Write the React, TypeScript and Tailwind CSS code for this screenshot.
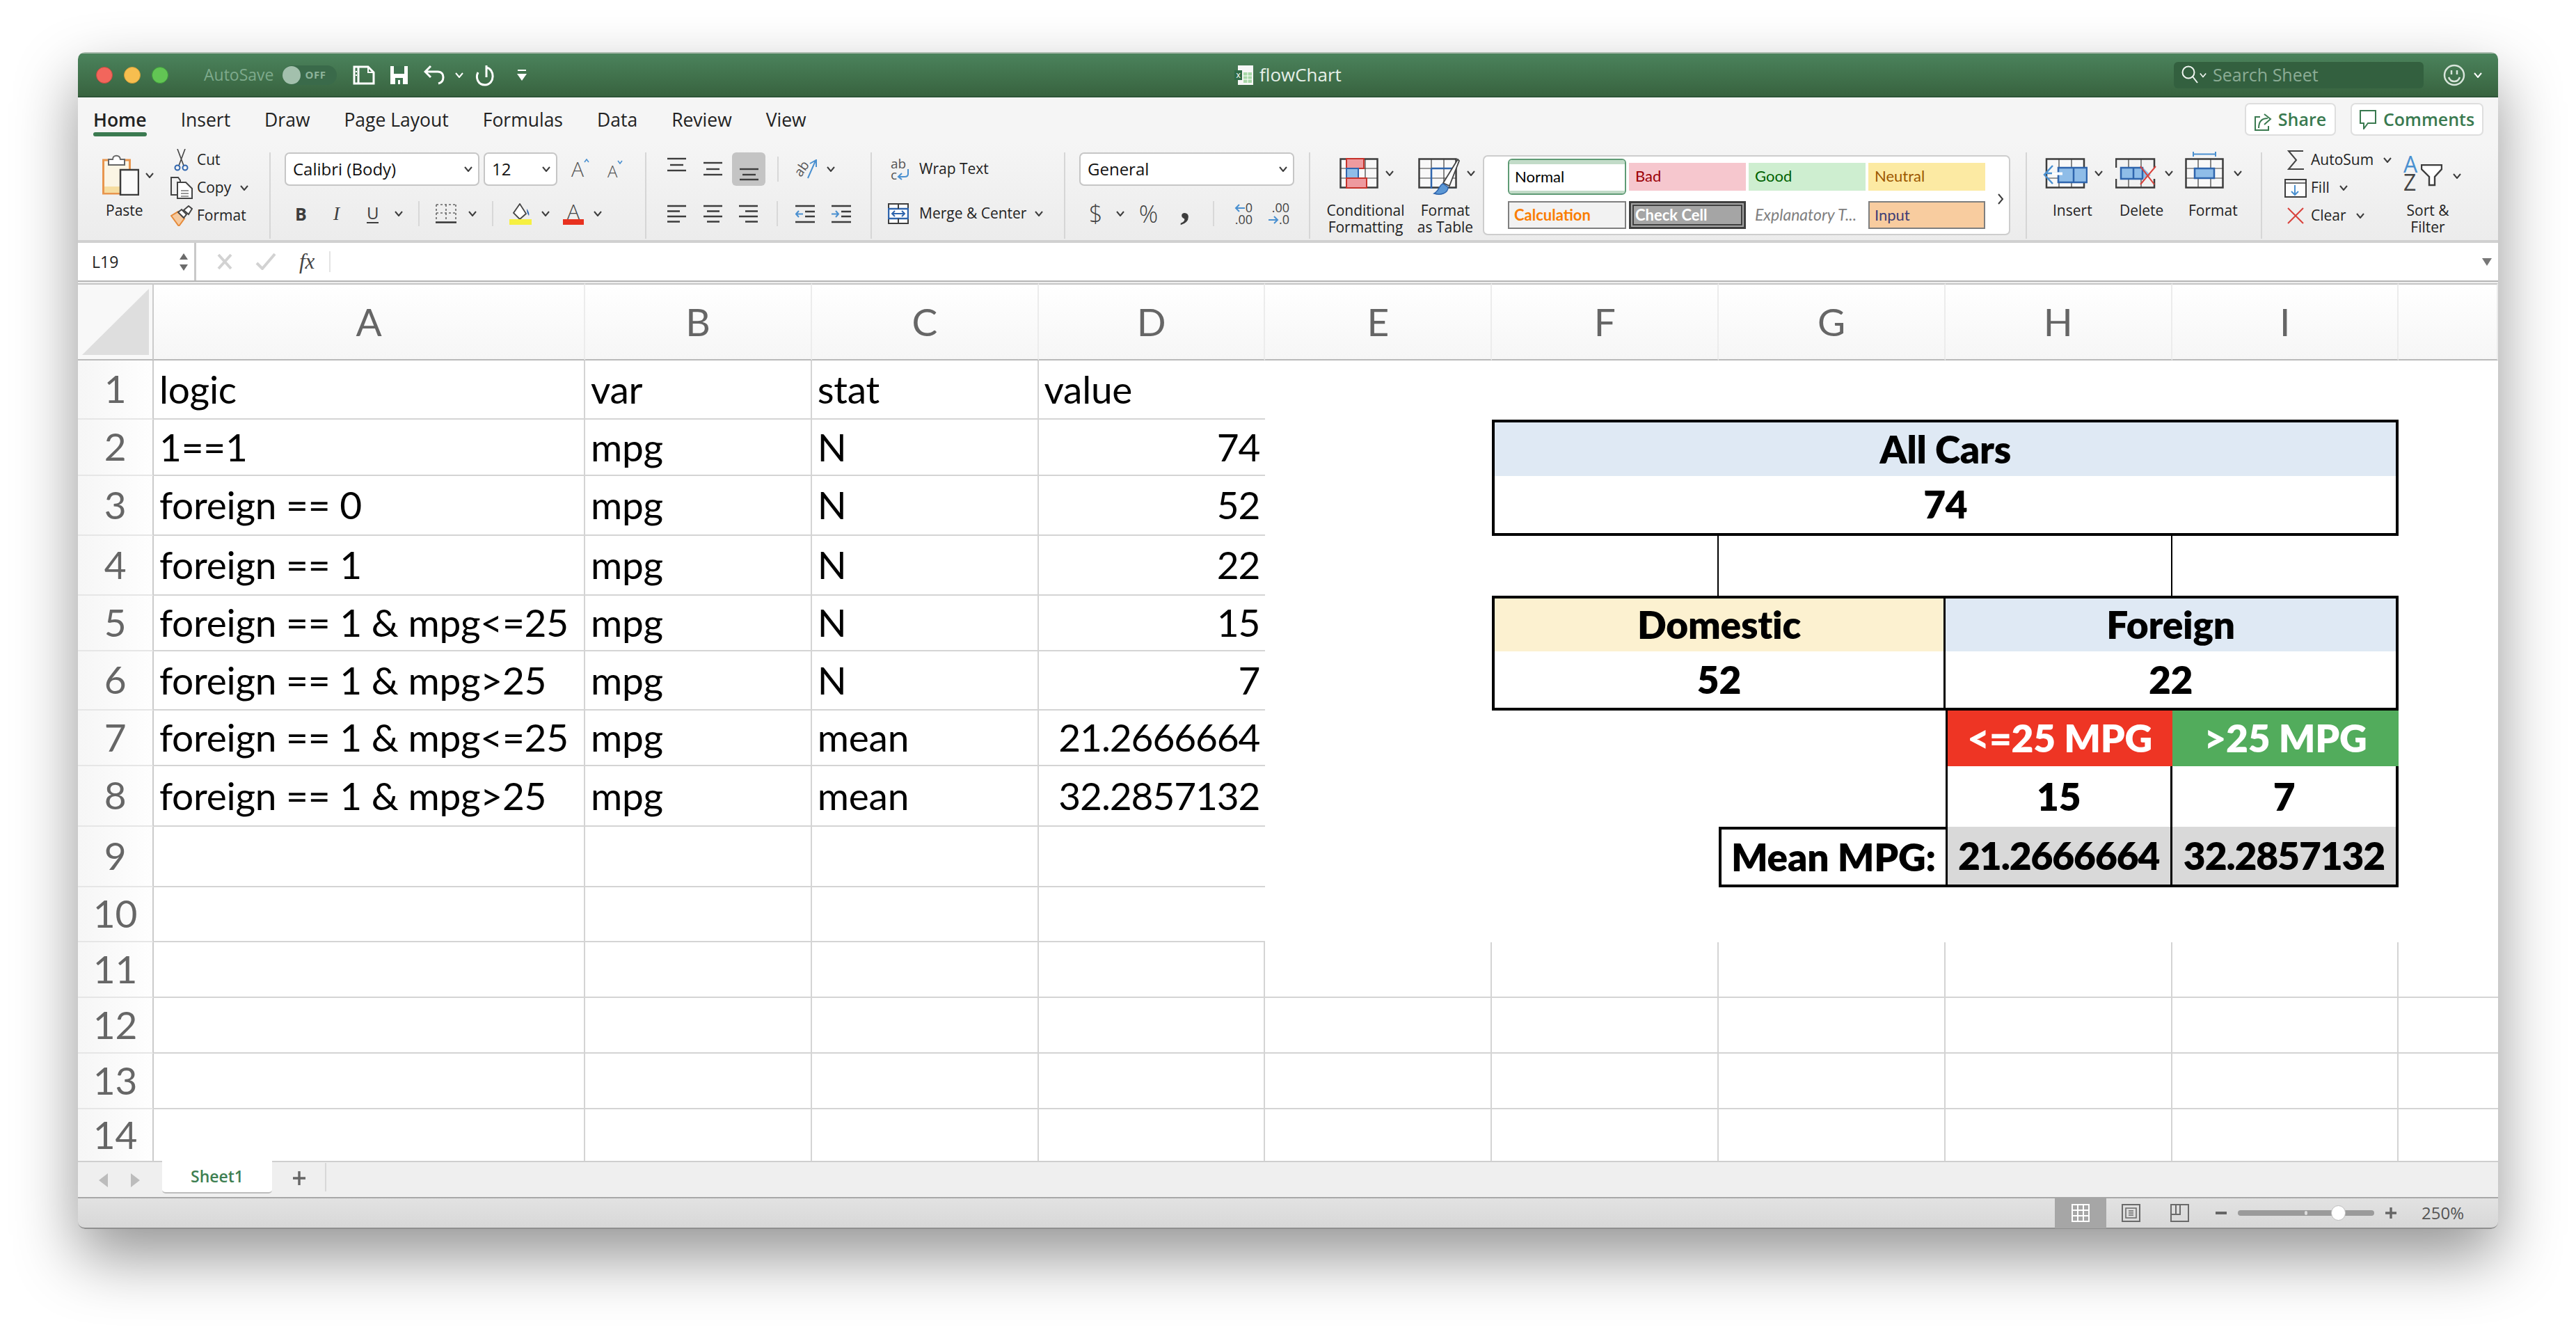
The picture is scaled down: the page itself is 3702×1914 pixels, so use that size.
import type { ReactNode } from "react";

const BLUE = "#4a90d0";
const NAVY = "#2f65ad";

function Caret({ className = "", color = "#3c3c3c" }: { className?: string; color?: string }) {
  return (
    <svg width="12" height="8" viewBox="0 0 12 8" className={`shrink-0 ${className}`}>
      <path d="M1 1l5 6 5-6" fill="none" stroke={color} strokeWidth="2" />
    </svg>
  );
}

function SmallSep({ className = "" }: { className?: string }) {
  return <div className={`h-[36px] w-[2px] shrink-0 bg-[#d8d8d8] ${className}`} />;
}

function GroupDivider() {
  return <div className="mt-[14px] h-[124px] w-[2px] shrink-0 bg-[#d6d6d6]" />;
}

function Select({ label, width, className = "" }: { label: string; width: string; className?: string }) {
  return (
    <div
      className={`flex h-[48px] items-center justify-between rounded-[7px] border-2 border-[#c6c6c6] bg-white pl-[10px] pr-[8px] text-[24px] text-[#111] ${width} ${className}`}
    >
      <span>{label}</span>
      <Caret />
    </div>
  );
}

/* ---------- icons ---------- */

function Paste() {
  return (
    <svg width="53" height="59" viewBox="0 0 53 59">
      <rect x="1.5" y="8" width="38" height="48" fill="#fbf5e4" stroke="#e8964e" strokeWidth="3" />
      <rect x="3" y="46" width="24" height="9" fill="#f6dda0" />
      <path d="M9 15V7h6c0-7 10-7 11 0h6v8z" fill="#fff" stroke="#666" strokeWidth="2" />
      <rect x="26" y="22" width="26" height="36" fill="#fafafa" stroke="#3b3b3b" strokeWidth="2.5" />
    </svg>
  );
}

function Scissors() {
  return (
    <svg width="21" height="32" viewBox="0 0 21 32">
      <path d="M5 0l9 24M16 0L7 24" fill="none" stroke="#444" strokeWidth="1.6" />
      <circle cx="5" cy="27" r="3.5" fill="none" stroke={NAVY} strokeWidth="2" />
      <circle cx="16" cy="27" r="3.5" fill="none" stroke={NAVY} strokeWidth="2" />
    </svg>
  );
}

function Copy() {
  return (
    <svg width="32" height="32" viewBox="0 0 32 32">
      <path d="M9 26H1V1h10l3 4v3" fill="none" stroke="#444" strokeWidth="2" />
      <path d="M10 8h12l9 9v14H10z" fill="#fff" stroke="#444" strokeWidth="2" />
      <path d="M15 20h11M15 24h11M15 28h11" stroke="#777" strokeWidth="1.5" />
    </svg>
  );
}

function FormatPainter() {
  return (
    <svg width="32" height="30" viewBox="0 0 32 30">
      <path d="M1 15l10-6 9 10-8 11z" fill="#f6c99d" stroke="#e58a3a" strokeWidth="2" />
      <path d="M11 10l5-4 7 7-4 5z" fill="#fff" stroke="#444" strokeWidth="2" />
      <path d="M19 7l7-6 5 4-5 8z" fill="#fff" stroke="#444" strokeWidth="2" />
    </svg>
  );
}

function Borders() {
  return (
    <svg width="30" height="28" viewBox="0 0 30 28">
      <path d="M1 1h28M1 1v24M29 1v24M15 1v24M1 13h28" fill="none" stroke="#666" strokeWidth="1.6" strokeDasharray="3 3" />
      <path d="M0 26.5h30" stroke="#333" strokeWidth="2.5" />
    </svg>
  );
}

function FillColor() {
  return (
    <svg width="32" height="31" viewBox="0 0 32 31">
      <path d="M15 1l-9 13 9 9 9-8z" fill="#fff" stroke="#444" strokeWidth="1.8" />
      <path d="M25 8c3 4 4 8 3 10-1-2-3-4-3-10z" fill={NAVY} />
      <rect y="23" width="32" height="8" fill="#f6f041" />
    </svg>
  );
}

function AlignV({ ys }: { ys: number[] }) {
  return (
    <svg width="27" height="48" viewBox="0 0 27 48" className="shrink-0">
      {ys.map((y, i) => (
        <path key={y} d={i === 1 ? `M4 ${y}h19` : `M0 ${y}h27`} stroke="#3d3d3d" strokeWidth="2.4" />
      ))}
    </svg>
  );
}

function AlignH({ kind }: { kind: "l" | "c" | "r" }) {
  const short = kind === "l" ? "M0" : kind === "c" ? "M5" : "M9";
  return (
    <svg width="27" height="27" viewBox="0 0 27 27" className="shrink-0">
      <path d="M0 2h27M0 17h27" stroke="#3d3d3d" strokeWidth="2.4" />
      <path d={`${short} 9.5h18${short} 24.5h18`} stroke="#3d3d3d" strokeWidth="2.4" />
    </svg>
  );
}

function Indent({ out }: { out?: boolean }) {
  return (
    <svg width="28" height="27" viewBox="0 0 28 27" className="shrink-0">
      <path d="M0 2h28M0 25h28M14 10h14M14 17h14" stroke="#3d3d3d" strokeWidth="2.4" />
      {out ? (
        <path d="M11 13.5H1M5 9l-4 4.5L5 18" fill="none" stroke={BLUE} strokeWidth="2" />
      ) : (
        <path d="M0 13.5h10M6 9l4 4.5L6 18" fill="none" stroke={BLUE} strokeWidth="2" />
      )}
    </svg>
  );
}

function Orientation() {
  return (
    <div className="flex h-[30px] w-[33px] shrink-0 items-center">
      <span className="w-[20px] -rotate-[55deg] text-center text-[19px] leading-[20px] text-[#555]">ab</span>
      <svg width="14" height="28" viewBox="0 0 14 28" className="-ml-[1px] shrink-0">
        <path d="M1 27L12 2M4 6l9-5 0 10" fill="none" stroke={BLUE} strokeWidth="2" />
      </svg>
    </div>
  );
}

function WrapIcon() {
  return (
    <div className="flex w-[30px] shrink-0 flex-col text-[19px] leading-[16px] text-[#555]">
      <span>ab</span>
      <div className="flex">
        <span>c</span>
        <svg width="18" height="16" viewBox="0 0 18 16" className="shrink-0">
          <path d="M16 0v7c0 3-2 4-5 4H3M7 6l-5 5 5 4" fill="none" stroke={BLUE} strokeWidth="2" />
        </svg>
      </div>
    </div>
  );
}

function MergeIcon() {
  return (
    <svg width="30" height="30" viewBox="0 0 30 30" className="shrink-0">
      <rect x="1" y="1" width="28" height="28" fill="#fff" stroke="#3d3d3d" strokeWidth="2" />
      <rect x="1" y="8" width="28" height="14" fill="#fff" stroke={NAVY} strokeWidth="2.5" />
      <path d="M15 1v7M15 22v7" stroke="#3d3d3d" strokeWidth="2" />
      <path d="M6 15h18M10 11l-4 4 4 4M20 11l4 4-4 4" fill="none" stroke={NAVY} strokeWidth="2" />
    </svg>
  );
}

function Decimals({ more }: { more?: boolean }) {
  const arrowLeft = (
    <svg width="16" height="14" viewBox="0 0 16 14" className="shrink-0">
      <path d="M15 7H2M7 2L2 7l5 5" fill="none" stroke={BLUE} strokeWidth="2" />
    </svg>
  );
  const arrowRight = (
    <svg width="16" height="14" viewBox="0 0 16 14" className="shrink-0">
      <path d="M1 7h13M9 2l5 5-5 5" fill="none" stroke={BLUE} strokeWidth="2" />
    </svg>
  );
  return (
    <div className="flex w-[32px] shrink-0 flex-col items-end text-[18px] leading-[17px] text-[#444]">
      {more ? (
        <>
          <div className="flex items-center">{arrowLeft}<span>0</span></div>
          <span>.00</span>
        </>
      ) : (
        <>
          <span>.00</span>
          <div className="flex items-center">{arrowRight}<span>.0</span></div>
        </>
      )}
    </div>
  );
}

function CellGrid({ children }: { children?: ReactNode }) {
  return (
    <>
      <rect x="1.5" y="1.5" width="53" height="41" fill="#f8f8f8" stroke="#3d3d3d" strokeWidth="2.5" />
      {children}
      <path d="M19 1v42M37 1v42M1 15h54M1 29h54" stroke="#3d3d3d" strokeWidth="1.2" />
    </>
  );
}

function ConditionalIcon() {
  return (
    <svg width="56" height="44" viewBox="0 0 56 44">
      <CellGrid />
      <rect x="10" y="1" width="25" height="14" fill="#ee9a9f" stroke="#c6332b" strokeWidth="2" />
      <rect x="10" y="15" width="17" height="14" fill="#8fbde8" stroke={NAVY} strokeWidth="2" />
      <rect x="10" y="29" width="29" height="14" fill="#ee9a9f" stroke="#c6332b" strokeWidth="2" />
    </svg>
  );
}

function TableIcon() {
  return (
    <svg width="60" height="54" viewBox="0 0 60 54">
      <rect x="19" y="15" width="36" height="29" fill="#8fbde8" />
      <CellGrid />
      <path d="M19 15h36M19 15v29" stroke={NAVY} strokeWidth="2.5" />
      <path d="M36 36L57 2l2 2-14 36z" fill="#fff" stroke="#444" strokeWidth="1.8" />
      <path d="M36 37c-6 1-5 10-13 14 9 3 20 0 20-9z" fill="#5b97d5" stroke={NAVY} strokeWidth="1.5" />
    </svg>
  );
}

function InsertIcon() {
  return (
    <svg width="64" height="44" viewBox="0 0 64 44">
      <rect x="5" y="1.5" width="54" height="41" fill="#f8f8f8" stroke="#3d3d3d" strokeWidth="2.5" />
      <path d="M23 1v42M41 1v42M5 29h54" stroke="#3d3d3d" strokeWidth="1.2" />
      <rect x="22" y="20" width="41" height="21" transform="translate(0 -6)" fill="#8fbde8" stroke={NAVY} strokeWidth="2.5" />
      <path d="M44 14v22" stroke={NAVY} strokeWidth="2.5" />
      <path d="M28 22H4M14 11L2 24l12 13" fill="none" stroke={BLUE} strokeWidth="2.5" />
      <path d="M13 20.5h15v4H13" fill="#fff" />
    </svg>
  );
}

function DeleteIcon() {
  return (
    <svg width="60" height="44" viewBox="0 0 60 44">
      <path d="M1 14V1.5h55V14M1 30v12.5h55V30" fill="none" stroke="#3d3d3d" strokeWidth="2.5" />
      <path d="M19 1v13M37 1v13M19 30v13M37 30v13" stroke="#3d3d3d" strokeWidth="1.2" />
      <path d="M8 14h32l11 11-11 5H8z" fill="#8fbde8" />
      <path d="M8 14h31v16H8zM26 14v16" fill="none" stroke={NAVY} strokeWidth="2.5" />
      <path d="M36 16l20 26M58 16L36 42" stroke="#d9423c" strokeWidth="2" transform="translate(0 -4)" />
    </svg>
  );
}

function FormatCellIcon() {
  return (
    <svg width="56" height="54" viewBox="0 0 56 54">
      <path d="M12 1v7M12 4.5h32M44 1v7" fill="none" stroke={BLUE} strokeWidth="2" />
      <g transform="translate(0 10)">
        <CellGrid />
        <rect x="14" y="15" width="28" height="14" fill="#8fbde8" stroke={NAVY} strokeWidth="2.5" />
      </g>
    </svg>
  );
}

function Sigma() {
  return (
    <svg width="24" height="28" viewBox="0 0 24 28">
      <path d="M23 1H2l11 13L2 27h22" fill="none" stroke="#444" strokeWidth="2" />
    </svg>
  );
}

function FillDown() {
  return (
    <svg width="32" height="27" viewBox="0 0 32 27">
      <rect x="1" y="1" width="30" height="25" fill="#fdfdfd" stroke="#3d3d3d" strokeWidth="2" />
      <path d="M1 6h30" stroke="#3d3d3d" strokeWidth="1.5" />
      <path d="M15 9v14M10 18l5 5 5-5" fill="none" stroke={BLUE} strokeWidth="2" />
    </svg>
  );
}

function ClearX() {
  return (
    <svg width="24" height="24" viewBox="0 0 24 24">
      <path d="M1 1l22 22M23 1L1 23" stroke="#d9423c" strokeWidth="2" />
    </svg>
  );
}

function SortIcon() {
  return (
    <div className="flex h-[52px] w-[56px] shrink-0 items-start">
      <div className="flex w-[25px] shrink-0 flex-col text-[32px] leading-[26px]">
        <span className="text-[#4a90d0]">A</span>
        <span className="text-[#444]">Z</span>
      </div>
      <svg width="31" height="32" viewBox="0 0 31 32" className="mt-[13px] shrink-0">
        <path d="M1 1h29v6L20 18v12h-8V18L1 7z" fill="#fff" stroke="#3d3d3d" strokeWidth="2.4" />
      </svg>
    </div>
  );
}

function FileIcon() {
  return (
    <div className="flex h-[28px] w-[27px] items-center bg-gradient-to-r from-transparent from-[20%] to-[#f7f7f7] to-[20%]">
      <span className="flex h-[14px] w-[11px] items-center justify-center bg-[#2f6b46] text-[12px] leading-none text-white">x</span>
      <svg width="16" height="28" viewBox="0 0 16 28" className="shrink-0">
        <rect width="16" height="28" fill="#f7f7f7" />
        <rect x="2" y="10" width="12" height="15" fill="#a8d8a8" />
        <path d="M2 15h12M2 20h12M8 10v15" stroke="#fff" strokeWidth="1" />
      </svg>
    </div>
  );
}

/* ---------- title bar ---------- */

function TitleBar() {
  return (
    <div className="grid h-[65px] grid-cols-[1fr_auto_1fr] items-center border-b-2 border-t-2 border-b-[#2d5437] border-t-[#a6b8aa] bg-gradient-to-b from-[#4b835c] to-[#38633f]">
      <div className="flex items-center pl-[26px]">
        <div className="h-[24px] w-[24px] rounded-full border border-[#c9483f] bg-[#f2665c]" />
        <div className="ml-[16px] h-[24px] w-[24px] rounded-full border border-[#d39e36] bg-[#f7be4f]" />
        <div className="ml-[16px] h-[24px] w-[24px] rounded-full border border-[#3f9e3c] bg-[#62c554]" />
        <span className="ml-[51px] text-[23px] text-[#7eaa8c]">AutoSave</span>
        <div className="ml-[13px] flex h-[28px] w-[78px] items-center rounded-full bg-[#3a6a4a]">
          <div className="h-[26px] w-[26px] rounded-full bg-[#a3c0ad]" />
          <span className="ml-[6px] text-[15px] font-bold tracking-[0.5px] text-[#8db39a]">OFF</span>
        </div>
        <svg width="32" height="28" viewBox="0 0 32 28" className="ml-[23px]">
          <path d="M2 2h20l8 8v16H2zM8 2v24" fill="none" stroke="#fff" strokeWidth="3" />
          <path d="M22 2v8h8" fill="none" stroke="#fff" strokeWidth="2" />
          <path d="M5 8v2M5 13v2" stroke="#fff" strokeWidth="2" />
        </svg>
        <svg width="27" height="28" viewBox="0 0 27 28" className="ml-[21px]">
          <path d="M1 1h25v26H1z" fill="#fff" />
          <rect x="6" y="1" width="15" height="11" fill="#3f7350" />
          <rect x="8" y="18" width="11" height="9" fill="#3f7350" />
          <rect x="12" y="21" width="3" height="6" fill="#fff" />
        </svg>
        <svg width="30" height="30" viewBox="0 0 30 30" className="ml-[22px]">
          <path d="M3 10h17c6 0 8 4 8 8 0 5-3 8-7 9M10 2L2 10l8 8" fill="none" stroke="#fff" strokeWidth="3" />
        </svg>
        <Caret className="ml-[15px]" color="#fff" />
        <svg width="30" height="32" viewBox="0 0 30 32" className="ml-[17px]">
          <path d="M16 2v17M16 5c12 2 13 24-2 25C4 30 0 20 4 12" fill="none" stroke="#fff" strokeWidth="3" />
        </svg>
        <svg width="14" height="16" viewBox="0 0 14 16" className="ml-[30px]">
          <path d="M1 1h12" stroke="#fff" strokeWidth="2" />
          <path d="M0 6h14l-7 10z" fill="#fff" />
        </svg>
      </div>
      <div className="flex items-center gap-[9px]">
        <FileIcon />
        <span className="text-[26px] text-[#e6efe8]">flowChart</span>
      </div>
      <div className="flex items-center justify-end pr-[23px]">
        <div className="flex h-[38px] w-[359px] items-center rounded-[6px] bg-[#33603f] pl-[11px]">
          <svg width="24" height="28" viewBox="0 0 24 28">
            <circle cx="10" cy="10" r="8.5" fill="none" stroke="#f0f5f1" strokeWidth="2" />
            <path d="M16 16l7 9" stroke="#f0f5f1" strokeWidth="2" />
          </svg>
          <Caret className="ml-[2px] w-[10px]" color="#f0f5f1" />
          <span className="ml-[9px] text-[25px] font-medium text-[#8bac95]">Search Sheet</span>
        </div>
        <svg width="32" height="32" viewBox="0 0 32 32" className="ml-[28px]">
          <circle cx="16" cy="16" r="14" fill="none" stroke="#d7e4da" strokeWidth="2.5" />
          <path d="M12 9v6M20 9v6M8 19c3 8 13 8 16 0" fill="none" stroke="#d7e4da" strokeWidth="2.5" />
        </svg>
        <Caret className="ml-[12px]" color="#fff" />
      </div>
    </div>
  );
}

/* ---------- ribbon ---------- */

function TabBar() {
  const rest = ["Insert", "Draw", "Page Layout", "Formulas", "Data", "Review", "View"];
  return (
    <div className="flex h-[65px] justify-between bg-[#f5f5f5] pl-[22px] pr-[21px]">
      <div className="flex gap-[49px] pt-[15px] text-[26.5px] text-[#222]">
        <div className="flex flex-col">
          <span className="h-[35px] font-semibold leading-[34px]">Home</span>
          <div className="h-[6px] rounded-full bg-[#3b7a50]" />
        </div>
        {rest.map((t) => (
          <span key={t} className="h-[35px] leading-[34px]">{t}</span>
        ))}
      </div>
      <div className="flex gap-[21px] pt-[8px] text-[25px] font-semibold text-[#3a7a50]">
        <div className="flex h-[47px] w-[131px] items-center justify-center gap-[9px] rounded-[7px] border-2 border-[#dedede] bg-white">
          <svg width="25" height="35" viewBox="0 0 25 35">
            <path d="M8 14H1v19h19v-6M6 30c0-10 5-14 13-14M14 10l9 7-9 8" fill="none" stroke="#3a7a50" strokeWidth="2" />
          </svg>
          <span>Share</span>
        </div>
        <div className="flex h-[47px] w-[191px] items-center justify-center gap-[10px] rounded-[7px] border-2 border-[#dedede] bg-white">
          <svg width="24" height="28" viewBox="0 0 24 28">
            <path d="M1 1h22v18H12l-6 8v-8H1z" fill="none" stroke="#3a7a50" strokeWidth="2" />
          </svg>
          <span>Comments</span>
        </div>
      </div>
    </div>
  );
}

function StackRow({ icon, label, caret, iconWidth = "w-[44px]" }: { icon: ReactNode; label: string; caret?: string; iconWidth?: string }) {
  return (
    <div className="flex h-[40px] items-center">
      <div className={`flex shrink-0 items-center justify-center ${iconWidth}`}>{icon}</div>
      <span>{label}</span>
      {caret && <Caret className={caret} />}
    </div>
  );
}

function Ribbon() {
  const label = "text-center text-[21px] leading-[24px] text-[#222]";
  return (
    <div className="flex h-[144px] border-b-4 border-[#d0d0d0] bg-gradient-to-b from-[#f5f5f5] to-[#ececec] text-[21px] text-[#222]">
      {/* clipboard */}
      <div className="flex w-[275px] shrink-0 pl-[35px]">
        <div className="flex w-[91px] shrink-0 flex-col pt-[17px]">
          <div className="flex items-center">
            <Paste />
            <Caret className="ml-[9px]" />
          </div>
          <span className="ml-[5px] mt-[7px] leading-[28px]">Paste</span>
        </div>
        <div className="flex flex-col pt-[5px]">
          <StackRow icon={<Scissors />} label="Cut" iconWidth="w-[45px]" />
          <StackRow icon={<Copy />} label="Copy" iconWidth="w-[45px]" caret="ml-[13px]" />
          <StackRow icon={<FormatPainter />} label="Format" iconWidth="w-[45px]" />
        </div>
      </div>
      <GroupDivider />

      {/* font */}
      <div className="w-[538px] shrink-0 pl-[20px] pt-[14px]">
        <div className="flex items-center">
          <Select label="Calibri (Body)" width="w-[280px]" />
          <Select label="12" width="w-[106px]" className="ml-[6px]" />
          <div className="ml-[20px] flex w-[24px] items-start">
            <span className="text-[30px] font-light leading-[34px] text-[#555]">A</span>
            <svg width="8" height="6" viewBox="0 0 8 6" className="mt-[2px] shrink-0">
              <path d="M1 5l3-4 3 4" fill="none" stroke={BLUE} strokeWidth="1.6" />
            </svg>
          </div>
          <div className="ml-[28px] flex w-[25px] items-start">
            <span className="mt-[6px] text-[24px] font-light leading-[28px] text-[#555]">A</span>
            <svg width="8" height="6" viewBox="0 0 8 6" className="mt-[4px] shrink-0">
              <path d="M1 1l3 4 3-4" fill="none" stroke={BLUE} strokeWidth="1.6" />
            </svg>
          </div>
        </div>
        <div className="mt-[22px] flex h-[36px] items-center pl-[15px] text-[#3d3d3d]">
          <span className="w-[14px] text-[25px] font-bold leading-none">B</span>
          <span className="ml-[41px] w-[12px] font-['Liberation_Serif',serif] text-[27px] italic leading-none">I</span>
          <span className="ml-[36px] w-[17px] border-b-2 border-[#3d3d3d] text-[24px] leading-[26px]">U</span>
          <Caret className="ml-[23px]" />
          <SmallSep className="ml-[22px]" />
          <div className="ml-[23px]"><Borders /></div>
          <Caret className="ml-[17px]" />
          <SmallSep className="ml-[22px]" />
          <div className="ml-[23px]"><FillColor /></div>
          <Caret className="ml-[14px]" />
          <div className="ml-[19px] flex w-[30px] flex-col items-center">
            <span className="text-[30px] font-light leading-[23px] text-[#444]">A</span>
            <div className="h-[8px] w-full bg-[#e8311f]" />
          </div>
          <Caret className="ml-[14px]" />
        </div>
      </div>
      <GroupDivider />

      {/* alignment */}
      <div className="w-[322px] shrink-0 pl-[30px] pt-[14px]">
        <div className="flex h-[48px] items-center">
          <AlignV ys={[9, 18, 26]} />
          <div className="ml-[25px]"><AlignV ys={[15, 24, 32]} /></div>
          <div className="ml-[14px] flex h-[48px] w-[48px] justify-center rounded-[6px] bg-[#c4c4c4]">
            <AlignV ys={[24, 32, 39]} />
          </div>
          <SmallSep className="ml-[17px]" />
          <div className="ml-[22px]"><Orientation /></div>
          <Caret className="ml-[14px]" />
        </div>
        <div className="mt-[22px] flex h-[36px] items-center">
          <AlignH kind="l" />
          <div className="ml-[25px]"><AlignH kind="c" /></div>
          <div className="ml-[24px]"><AlignH kind="r" /></div>
          <SmallSep className="ml-[27px]" />
          <div className="ml-[25px]"><Indent out /></div>
          <div className="ml-[24px]"><Indent /></div>
        </div>
      </div>
      <GroupDivider />

      {/* wrap / merge */}
      <div className="w-[276px] shrink-0 pt-[14px]">
        <div className="flex h-[48px] items-center pl-[27px]">
          <WrapIcon />
          <span className="ml-[11px]">Wrap Text</span>
        </div>
        <div className="mt-[22px] flex h-[36px] items-center pl-[23px]">
          <MergeIcon />
          <span className="ml-[15px]">Merge &amp; Center</span>
          <Caret className="ml-[12px]" />
        </div>
      </div>
      <GroupDivider />

      {/* number */}
      <div className="w-[350px] shrink-0 pl-[20px] pt-[14px]">
        <Select label="General" width="w-[309px]" />
        <div className="mt-[22px] flex h-[36px] items-center pl-[14px] text-[#3d3d3d]">
          <span className="w-[15px] text-center text-[34px] font-light leading-none">$</span>
          <Caret className="ml-[24px]" />
          <span className="ml-[20px] w-[29px] text-center text-[34px] font-light leading-none">%</span>
          <span className="-mt-[24px] ml-[30px] w-[16px] text-center font-['Liberation_Serif',serif] text-[56px] font-bold leading-[20px]">,</span>
          <SmallSep className="ml-[32px]" />
          <div className="ml-[23px]"><Decimals more /></div>
          <div className="ml-[21px]"><Decimals /></div>
        </div>
      </div>
      <GroupDivider />

      {/* styles */}
      <div className="flex w-[248px] shrink-0 pl-[12px] pt-[22px]">
        <div className={`flex w-[135px] shrink-0 flex-col ${label}`}>
          <div className="flex h-[63px] items-start pl-[30px]">
            <ConditionalIcon />
            <Caret className="ml-[10px] mt-[18px]" />
          </div>
          <span>Conditional</span>
          <span>Formatting</span>
        </div>
        <div className={`flex w-[94px] shrink-0 flex-col ${label}`}>
          <div className="flex h-[63px] items-start pl-[8px]">
            <TableIcon />
            <Caret className="ml-[10px] mt-[18px]" />
          </div>
          <span>Format</span>
          <span>as Table</span>
        </div>
      </div>
      <div className="mt-[18px] flex h-[115px] w-[758px] shrink-0 items-start rounded-[7px] border-2 border-[#cdcdcd] bg-white pl-[34px] pt-[3px] font-[Lato,sans-serif] text-[22px]">
        <div className="grid grid-cols-[170px_168px_168px_168px] grid-rows-[52px_40px] items-center gap-x-[4px] gap-y-[9px]">
          <div className="flex h-[52px] flex-col overflow-hidden rounded-[6px] border-2 border-[#5f9b75] text-black">
            <div className="h-[6px] bg-[#c2dbc8]" />
            <div className="flex flex-1 items-center pb-[3px] pl-[8px]">Normal</div>
            <div className="h-[4px] bg-[#c2dbc8]" />
          </div>
          <div className="flex h-[40px] items-center bg-[#f6c7ce] pb-[3px] pl-[9px] text-[#9c0006]">Bad</div>
          <div className="flex h-[40px] items-center bg-[#ceeed0] pb-[3px] pl-[9px] text-[#006100]">Good</div>
          <div className="flex h-[40px] items-center bg-[#fceaa3] pb-[3px] pl-[9px] text-[#9c5700]">Neutral</div>
          <div className="flex h-[40px] items-center border-2 border-[#7f7f7f] bg-[#f2f2f2] pb-[2px] pl-[7px] font-bold text-[#fa7d00]">Calculation</div>
          <div className="h-[40px] border-[3px] border-[#3f3f3f] bg-[#a5a5a5] p-[2px]">
            <div className="flex h-full items-center border-2 border-[#3f3f3f] pb-[1px] pl-[2px] font-bold text-white">Check Cell</div>
          </div>
          <div className="flex h-[40px] items-center pb-[2px] pl-[9px] text-[23px] italic text-[#7f7f7f]">Explanatory T...</div>
          <div className="flex h-[40px] items-center border-2 border-[#7f7f7f] bg-[#f8cc9f] pb-[2px] pl-[7px] text-[#3f3f76]">Input</div>
        </div>
        <svg width="10" height="16" viewBox="0 0 10 16" className="ml-[17px] mt-[50px] shrink-0">
          <path d="M2 1l6 7-6 7" fill="none" stroke="#3c3c3c" strokeWidth="2" />
        </svg>
      </div>
      <div className="w-[22px] shrink-0" />
      <GroupDivider />

      {/* cells */}
      <div className="flex w-[336px] shrink-0 pt-[12px]">
        <div className="flex w-[120px] shrink-0 flex-col">
          <div className="flex h-[73px] items-start pl-[23px] pt-[10px]">
            <InsertIcon />
            <Caret className="ml-[10px] mt-[18px]" />
          </div>
          <span className="pl-[37px] leading-[24px]">Insert</span>
        </div>
        <div className="flex w-[100px] shrink-0 flex-col">
          <div className="flex h-[73px] items-start pl-[7px] pt-[10px]">
            <DeleteIcon />
            <Caret className="ml-[11px] mt-[18px]" />
          </div>
          <span className="pl-[13px] leading-[24px]">Delete</span>
        </div>
        <div className="flex flex-col">
          <div className="flex h-[73px] items-start pl-[7px]">
            <FormatCellIcon />
            <Caret className="ml-[14px] mt-[28px]" />
          </div>
          <span className="pl-[12px] leading-[24px]">Format</span>
        </div>
      </div>
      <GroupDivider />

      {/* editing */}
      <div className="flex flex-1 pl-[26px] pt-[5px]">
        <div className="flex w-[177px] shrink-0 flex-col">
          <StackRow icon={<Sigma />} label="AutoSum" caret="ml-[14px]" />
          <StackRow icon={<FillDown />} label="Fill" caret="ml-[14px]" />
          <StackRow icon={<ClearX />} label="Clear" caret="ml-[14px]" />
        </div>
        <div className="flex flex-col pt-[13px]">
          <div className="flex h-[67px] items-start">
            <SortIcon />
            <Caret className="ml-[15px] mt-[26px]" />
          </div>
          <span className="w-[70px] text-center leading-[24px]">Sort &amp;</span>
          <span className="w-[70px] text-center leading-[24px]">Filter</span>
        </div>
      </div>
    </div>
  );
}

function FormulaBar() {
  return (
    <div className="flex h-[56px] border-b-2 border-[#b6b6b6] bg-white">
      <div className="flex w-[170px] shrink-0 items-center justify-between border-r-[3px] border-[#c9c9c9] pl-[20px] pr-[9px] text-[23px] text-[#222]">
        <span>L19</span>
        <div className="flex flex-col gap-[7px]">
          <div className="h-0 w-0 border-x-[6px] border-b-[9px] border-x-transparent border-b-[#6b6b6b]" />
          <div className="h-0 w-0 border-x-[6px] border-t-[9px] border-x-transparent border-t-[#6b6b6b]" />
        </div>
      </div>
      <div className="flex flex-1 items-center">
        <svg width="24" height="24" viewBox="0 0 24 24" className="ml-[30px]">
          <path d="M2 2l18 20M20 2L2 22" stroke="#d2d2d2" strokeWidth="4" />
        </svg>
        <svg width="30" height="24" viewBox="0 0 30 24" className="ml-[31px]">
          <path d="M2 14l8 8L28 1" fill="none" stroke="#d2d2d2" strokeWidth="4" />
        </svg>
        <span className="ml-[33px] w-[30px] font-['Liberation_Serif',serif] text-[31px] italic text-[#444]">fx</span>
        <div className="ml-[13px] h-[30px] w-[2px] bg-[#e4e4e4]" />
        <div className="flex-1" />
        <div className="mr-[9px] h-0 w-0 border-x-[7px] border-t-[11px] border-x-transparent border-t-[#777]" />
      </div>
    </div>
  );
}

/* ---------- sheet ---------- */

const LINE = "border-[#d4d4d4]";

function RowHead({ n, last }: { n: number; last?: boolean }) {
  return (
    <div
      className={`flex items-center justify-center border-r-2 border-r-[#cbcbcb] bg-gradient-to-r from-[#f6f6f6] to-[#fefefe] pb-[2px] text-[#666] ${last ? "" : "border-b-2 border-b-[#e6e6e6]"}`}
    >
      {n}
    </div>
  );
}

function Cell({ children, right, noRight }: { children?: ReactNode; right?: boolean; noRight?: boolean }) {
  return (
    <div
      className={`flex items-center whitespace-nowrap border-b-2 pb-[1px] ${LINE} ${noRight ? "" : "border-r-2"} ${right ? "justify-end pr-[8px] tracking-[-1.1px]" : "pl-[8px]"}`}
    >
      {children}
    </div>
  );
}

const TABLE_ROWS = [
  ["logic", "var", "stat", "value"],
  ["1==1", "mpg", "N", "74"],
  ["foreign == 0", "mpg", "N", "52"],
  ["foreign == 1", "mpg", "N", "22"],
  ["foreign == 1 & mpg<=25", "mpg", "N", "15"],
  ["foreign == 1 & mpg>25", "mpg", "N", "7"],
  ["foreign == 1 & mpg<=25", "mpg", "mean", "21.2666664"],
  ["foreign == 1 & mpg>25", "mpg", "mean", "32.2857132"],
  ["", "", "", ""],
  ["", "", "", ""],
];

function DataCells({ row }: { row: number }) {
  const r = TABLE_ROWS[row];
  return (
    <>
      <RowHead n={row + 1} />
      <Cell>{r[0]}</Cell>
      <Cell>{r[1]}</Cell>
      <Cell>{r[2]}</Cell>
      <Cell noRight right={row > 0}>{r[3]}</Cell>
    </>
  );
}

function Sheet() {
  const bold = "flex items-center justify-center whitespace-nowrap border-black pb-[1px] font-extrabold";
  return (
    <div className="grid grid-cols-[109px_620px_repeat(8,325.8px)_1fr] grid-rows-[111px_85px_81px_86px_86px_80px_85px_80px_87px_87px_79px_80px_80px_80px_74px] bg-white font-[Lato,sans-serif] text-[55px] leading-none tracking-[-0.25px] text-black">
      {/* column headers */}
      <div className="flex items-center justify-center border-y-2 border-r-2 border-t-[#c6c6c6] border-b-[#b9b9b9] border-r-[#cbcbcb] bg-[#f8f8f8]">
        <div className="h-0 w-0 border-b-[95px] border-l-[96px] border-b-[#dedede] border-l-transparent" />
      </div>
      {["A", "B", "C", "D", "E", "F", "G", "H", "I", ""].map((c) => (
        <div
          key={c}
          className="flex items-center justify-center border-y-2 border-r-2 border-t-[#c6c6c6] border-b-[#b9b9b9] border-r-[#ececec] bg-gradient-to-b from-white to-[#f6f6f6] text-[#666]"
        >
          {c}
        </div>
      ))}

      {/* row 1 */}
      <DataCells row={0} />
      <div className="col-span-6" />
      {/* row 2 */}
      <DataCells row={1} />
      <div />
      <div className={`${bold} col-span-4 border-x-4 border-t-4 bg-[#dfe9f4]`}>All Cars</div>
      <div />
      {/* row 3 */}
      <DataCells row={2} />
      <div />
      <div className={`${bold} col-span-4 border-x-4 border-b-4 bg-white`}>74</div>
      <div />
      {/* row 4, connectors */}
      <DataCells row={3} />
      <div />
      <div className="border-r-2 border-black" />
      <div />
      <div className="border-r-2 border-black" />
      <div />
      <div />
      {/* row 5 */}
      <DataCells row={4} />
      <div />
      <div className={`${bold} col-span-2 border-l-4 border-r-[3px] border-t-4 bg-[#fcf1d0]`}>Domestic</div>
      <div className={`${bold} col-span-2 border-r-4 border-t-4 bg-[#dfe9f4]`}>Foreign</div>
      <div />
      {/* row 6 */}
      <DataCells row={5} />
      <div />
      <div className={`${bold} col-span-2 border-b-4 border-l-4 border-r-[3px]`}>52</div>
      <div className={`${bold} col-span-2 border-b-4 border-r-4`}>22</div>
      <div />
      {/* row 7 */}
      <DataCells row={6} />
      <div className="col-span-3" />
      <div className={`${bold} border-l-[3px] bg-[#ee3524] text-white`}>&lt;=25 MPG</div>
      <div className={`${bold} bg-[#52ac5c] text-white`}>&gt;25 MPG</div>
      <div />
      {/* row 8 */}
      <DataCells row={7} />
      <div className="col-span-3" />
      <div className={`${bold} border-l-[3px] border-r-[3px]`}>15</div>
      <div className={`${bold} border-r-4`}>7</div>
      <div />
      {/* row 9 */}
      <DataCells row={8} />
      <div className="col-span-2" />
      <div className={`${bold} border-y-4 border-l-4`}>Mean MPG:</div>
      <div className={`${bold} border-b-4 border-l-[3px] border-r-[3px] bg-[#d9d9d9] tracking-[-1.1px]`}>21.2666664</div>
      <div className={`${bold} border-b-4 border-r-4 bg-[#d9d9d9] tracking-[-1.1px]`}>32.2857132</div>
      <div />
      {/* row 10 */}
      <DataCells row={9} />
      <div className="col-span-6" />

      {/* rows 11 to 14 */}
      {[11, 12, 13, 14].map((n) => (
        <div key={n} className="contents">
          <RowHead n={n} last={n === 14} />
          {Array.from({ length: 10 }, (_, i) => (
            <div key={i} className={`${LINE} ${n === 14 ? "" : "border-b-2"} ${i === 9 ? "" : "border-r-2"}`} />
          ))}
        </div>
      ))}
    </div>
  );
}

/* ---------- bottom bars ---------- */

function SheetTabs() {
  return (
    <div className="flex h-[52px] items-start border-t-2 border-[#cfcfcf] bg-[#efefef]">
      <div className="ml-[30px] mt-[16px] h-0 w-0 border-y-[10px] border-r-[13px] border-y-transparent border-r-[#bcbcbc]" />
      <div className="ml-[33px] mt-[16px] h-0 w-0 border-y-[10px] border-l-[13px] border-y-transparent border-l-[#bcbcbc]" />
      <div className="-mt-[2px] ml-[32px] flex h-[47px] w-[158px] items-center justify-center rounded-b-[5px] border-b-2 border-[#bdbdbd] bg-white text-[23px] font-semibold text-[#3e7f52]">
        Sheet1
      </div>
      <svg width="18" height="20" viewBox="0 0 18 20" className="ml-[30px] mt-[13px]">
        <path d="M9 0v20M0 10h18" stroke="#666" strokeWidth="3.4" />
      </svg>
      <div className="ml-[28px] mt-[1px] h-[41px] w-[2px] bg-[#d8d8d8]" />
    </div>
  );
}

function StatusBar() {
  return (
    <div className="flex h-[46px] items-center justify-end rounded-b-[10px] border-y-2 border-t-[#a8a8a8] border-b-[#8f8f8f] bg-gradient-to-b from-[#e2e2e2] to-[#d8d8d8] pr-[49px]">
      <div className="flex h-[44px] w-[74px] items-center justify-center bg-[#a6a6a6]">
        <svg width="26" height="26" viewBox="0 0 26 26">
          <rect x="1" y="1" width="24" height="24" fill="#a6a6a6" stroke="#fff" strokeWidth="2" />
          <path d="M9 1v24M17 1v24M1 9h24M1 17h24" stroke="#fff" strokeWidth="2" />
        </svg>
      </div>
      <svg width="27" height="26" viewBox="0 0 27 26" className="ml-[22px]">
        <rect x="1" y="1" width="25" height="24" fill="none" stroke="#6a6a6a" strokeWidth="2" />
        <path d="M6 6h15v14H6zM10 10h7M10 13h7M10 16h7" fill="none" stroke="#6a6a6a" strokeWidth="1.6" />
      </svg>
      <svg width="27" height="26" viewBox="0 0 27 26" className="ml-[43px]">
        <path d="M1 1h25v24H1zM1 15h13V1M8 1v14" fill="none" stroke="#6a6a6a" strokeWidth="2" />
      </svg>
      <div className="ml-[38px] h-[4px] w-[16px] bg-[#666]" />
      <div className="ml-[16px] flex h-[8px] w-[196px] items-center rounded-full bg-[#9b9b9b]">
        <div className="ml-[96px] h-[6px] w-[4px] rounded-full bg-[#dcdcdc]" />
        <div className="ml-[34px] h-[22px] w-[21px] rounded-full border border-[#bdbdbd] bg-white" />
      </div>
      <svg width="16" height="16" viewBox="0 0 16 16" className="ml-[16px]">
        <path d="M8 0v16M0 8h16" stroke="#666" strokeWidth="3.4" />
      </svg>
      <span className="ml-[36px] text-[24px] text-[#555]">250%</span>
    </div>
  );
}

export default function App() {
  return (
    <div className="h-[1914px] w-[3702px] overflow-hidden bg-white pl-[112px] pt-[75px] font-['Open_Sans',sans-serif]">
      <div className="w-[3478px] rounded-[10px] shadow-[0_40px_90px_rgba(0,0,0,0.42)]">
        <div className="overflow-hidden rounded-t-[10px]">
          <TitleBar />
        </div>
        <TabBar />
        <Ribbon />
        <FormulaBar />
        <div className="h-[2px] bg-[#efefef]" />
        <Sheet />
        <SheetTabs />
        <StatusBar />
      </div>
    </div>
  );
}
